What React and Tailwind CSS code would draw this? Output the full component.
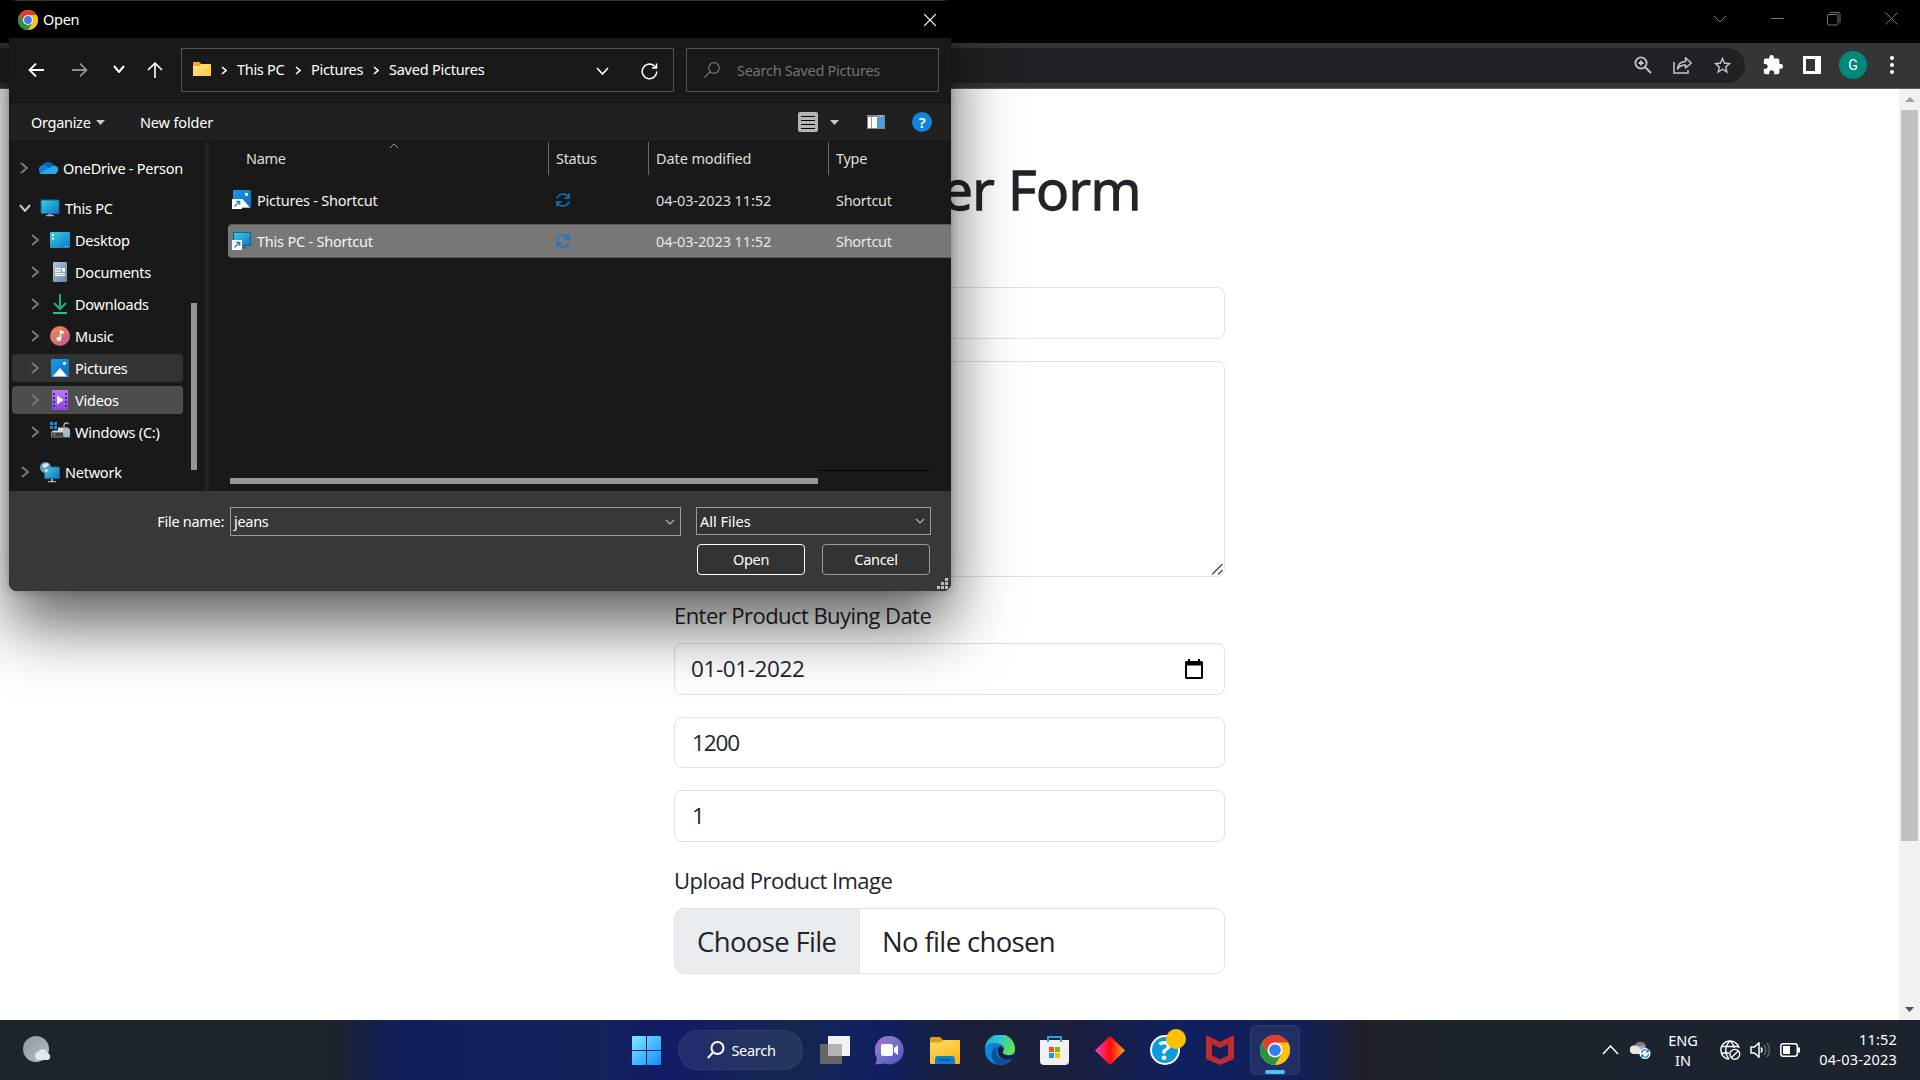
import React from 'react';

/* ---------- shared icons ---------- */

const Chrome = ({ size = 20 }) => (
  <svg width={size} height={size} viewBox="0 0 48 48">
    <circle cx="24" cy="24" r="24" fill="#fbc116" />
    <path d="M24 12 H44.8 A24 24 0 0 1 24 48 L34.4 30 Z" fill="#fbc116" />
    <path d="M3.2 12 L13.6 30 L24 24 L34.4 30 L24 48 A24 24 0 0 1 3.2 12 Z" fill="#2a9446" />
    <path d="M3.2 12 A24 24 0 0 1 44.8 12 H24 L13.6 30 Z" fill="#e33b2e" />
    <circle cx="24" cy="24" r="12" fill="#fff" />
    <circle cx="24" cy="24" r="9.4" fill="#3b7ded" />
  </svg>
);

const Chevron = ({ dir = 'right', w = 8, h = 12, color = '#7a7a7a', stroke = 2 }) => {
  const pts = {
    right: `1,1 ${w - 1},${h / 2} 1,${h - 1}`,
    down: `1,1 ${w / 2},${h - 1} ${w - 1},1`,
    up: `1,${h - 1} ${w / 2},1 ${w - 1},${h - 1}`,
  }[dir];
  return (
    <svg width={w} height={h} viewBox={`0 0 ${w} ${h}`} fill="none" stroke={color} strokeWidth={stroke} className="block shrink-0">
      <polyline points={pts} />
    </svg>
  );
};

const Triangle = ({ up = false, w = 9, h = 5, color = '#c8c8c8' }) => (
  <svg width={w} height={h} className="block shrink-0">
    <polygon points={up ? `0,${h} ${w},${h} ${w / 2},0` : `0,0 ${w},0 ${w / 2},${h}`} fill={color} />
  </svg>
);

const Gradients = () => (
  <svg width="0" height="0" className="absolute">
    <defs>
      <linearGradient id="screen" x1="0" y1="0" x2="1" y2="1"><stop offset="0" stopColor="#35d3e0" /><stop offset="1" stopColor="#1173c4" /></linearGradient>
      <linearGradient id="photo" x1="0" y1="0" x2="1" y2="1"><stop offset="0" stopColor="#1c9be6" /><stop offset="1" stopColor="#0b6ac4" /></linearGradient>
      <linearGradient id="folder" x1="0" y1="0" x2="1" y2="1"><stop offset="0" stopColor="#ffe59b" /><stop offset="1" stopColor="#ffc83a" /></linearGradient>
      <linearGradient id="doc" x1="0" y1="0" x2="1" y2="1"><stop offset="0" stopColor="#b3c5da" /><stop offset="1" stopColor="#6683a6" /></linearGradient>
      <linearGradient id="music" x1="0" y1="0" x2="1" y2="1"><stop offset="0" stopColor="#f08c4e" /><stop offset="0.55" stopColor="#d9706a" /><stop offset="1" stopColor="#a55bb5" /></linearGradient>
      <linearGradient id="video" x1="0" y1="0" x2="0" y2="1"><stop offset="0" stopColor="#b67bf2" /><stop offset="1" stopColor="#8a45e0" /></linearGradient>
      <linearGradient id="win" gradientUnits="userSpaceOnUse" x1="0" y1="0" x2="29" y2="29"><stop offset="0" stopColor="#7cecff" /><stop offset="1" stopColor="#0f8dfb" /></linearGradient>
      <linearGradient id="chat" x1="0" y1="0" x2="1" y2="1"><stop offset="0" stopColor="#b467b8" /><stop offset="0.35" stopColor="#8078c8" /><stop offset="1" stopColor="#4a4fc8" /></linearGradient>
      <linearGradient id="diamond" x1="0" y1="0" x2="1" y2="0"><stop offset="0" stopColor="#f045c8" /><stop offset="0.5" stopColor="#ff0a0a" /><stop offset="1" stopColor="#ff9c30" /></linearGradient>
      <linearGradient id="edgeA" x1="0" y1="0" x2="1" y2="0.5"><stop offset="0" stopColor="#1a9fe0" /><stop offset="0.5" stopColor="#33c5cf" /><stop offset="1" stopColor="#63e34f" /></linearGradient>
      <linearGradient id="moon" x1="0" y1="0" x2="1" y2="1"><stop offset="0" stopColor="#8d959f" /><stop offset="1" stopColor="#b9bfc7" /></linearGradient>
      <linearGradient id="exp" x1="0" y1="0" x2="0.6" y2="1"><stop offset="0" stopColor="#ffdc6b" /><stop offset="1" stopColor="#fbb818" /></linearGradient>
    </defs>
  </svg>
);

const Monitor = () => (
  <svg width="20" height="18" viewBox="0 0 20 18">
    <rect x="1" y="1" width="18" height="13.5" rx="0.8" fill="url(#screen)" stroke="#12659c" strokeWidth="1" />
    <path d="M8 15h4v1H8z" fill="#8a9aa8" /><path d="M6 16h8v1.2H6z" fill="#9fb0bd" />
  </svg>
);
const OneDrive = () => (
  <svg width="20" height="14" viewBox="0 0 20 14">
    <path d="M4 5.500A6.300 6.300 0 0 1 16 5.500L10 10z" fill="#0a62b8" />
    <path d="M4.500 13A4.500 4.500 0 0 1 5 4.100c2 0 3.600.8 5 2L14 13z" fill="#0f7fd8" />
    <path d="M1.500 12l8.500-4.600 5.800-3A4.300 4.300 0 0 1 16 13H4.500c-1 0-2.200-.3-3-1z" fill="#28a8ea" />
  </svg>
);
const Desktop = () => (
  <svg width="20" height="16" viewBox="0 0 20 16">
    <rect width="20" height="16" rx="1" fill="url(#screen)" />
    <path d="M2 2h2v2H2zM2 5.500h2v2H2z" fill="#fff" /><path d="M15 14h1v1h-1zM17 14h1v1h-1z" fill="#bfe9ff" />
  </svg>
);
const Doc = () => (
  <svg width="20" height="20" viewBox="0 0 20 20">
    <rect x="3" y="0" width="14" height="20" rx="1" fill="url(#doc)" />
    <path d="M5 6h6v1.200H5zM5 8.500h6v1.200H5zM12 6h3v3.500h-3zM5 11h10v1.200H5zM5 13h10v1H5z" fill="#fff" />
  </svg>
);
const Download = () => (
  <svg width="20" height="20" viewBox="0 0 20 20" fill="none">
    <path d="M10 0v14M4 9l6 6 6-6" stroke="#1fa98c" strokeWidth="2" /><path d="M3 19h14" stroke="#2dbd93" strokeWidth="2" />
  </svg>
);
const Music = () => (
  <svg width="20" height="20" viewBox="0 0 20 20">
    <circle cx="10" cy="10" r="10" fill="url(#music)" />
    <circle cx="8.800" cy="13" r="2.300" fill="#fff" /><path d="M9.800 4h1.300c.4 1 1.500 1.500 2.800 1.600v2c-1.100 0-2-.3-2.600-.7V13H9.800z" fill="#fff" />
  </svg>
);
const Photo = () => (
  <svg width="20" height="20" viewBox="0 0 20 20">
    <rect x="1" y="1" width="18" height="18" rx="1" fill="url(#photo)" />
    <circle cx="14.500" cy="5.300" r="1.600" fill="#fff" /><path d="M2.500 18.500L10 10l7.500 8.500z" fill="#fff" />
  </svg>
);
const Video = () => (
  <svg width="20" height="20" viewBox="0 0 20 20">
    <rect x="2" y="0" width="16" height="20" rx="1" fill="url(#video)" />
    <path d="M3 3h2v2H3zM3 7h2v2H3zM3 11h2v2H3zM3 15h2v2H3zM15 3h2v2h-2zM15 7h2v2h-2zM15 11h2v2h-2zM15 15h2v2h-2z" fill="#4a2a80" />
    <path d="M7 5.500l6.500 4.500L7 14.500z" fill="#fff" />
  </svg>
);
const Drive = () => (
  <svg width="20" height="20" viewBox="0 0 20 20">
    <path d="M0 0h3v3H0zM4 0h3v3H4zM0 4h3v3H0zM4 4h3v3H4z" fill="#1a8ae0" />
    <path d="M8 5.500h10l2 5H1l2-2h5z" fill="#d4d8da" /><rect x="1" y="10" width="19" height="5.500" rx="0.600" fill="#7c8082" /><rect x="2" y="11" width="13" height="3.500" fill="#3d4042" />
    <circle cx="4.500" cy="12.500" r="0.900" fill="#4be04b" />
    <path d="M14 5V3a2.500 2.500 0 0 1 4.500-1" fill="none" stroke="#a9bdca" strokeWidth="1.300" /><rect x="13" y="6" width="7" height="9" rx="2.500" fill="#a3b9c8" />
  </svg>
);
const Network = () => (
  <svg width="20" height="21" viewBox="0 0 20 21">
    <rect x="4.500" y="5" width="15" height="11.500" rx="0.600" fill="url(#screen)" stroke="#12659c" />
    <circle cx="5.500" cy="5.500" r="5.500" fill="#5f9fbe" /><path d="M2 3l4-2 3 1-2 3-3 1zM4 8l3-1 1 2-2 1.500z" fill="#d2ecf5" />
    <path d="M11 17h2v2h-2zM8 19h8v1.300H8z" fill="#a5b5c0" />
  </svg>
);

const Shortcut = ({ pc }) => (
  <svg width="20" height="20" viewBox="0 0 20 20">
    {pc ? (
      <g><rect x="1.500" y="1.500" width="17" height="13" fill="url(#screen)" stroke="#12659c" /><path d="M10 16h4v1.300h-4z" fill="#4b5660" /></g>
    ) : (
      <g><rect x="1" y="0" width="18" height="18" rx="1" fill="url(#photo)" /><circle cx="14.500" cy="4.400" r="1.600" fill="#fff" /><path d="M9 9l1.500 0 7.500 8.500H9z" fill="#fff" /></g>
    )}
    <rect x="0" y="9" width="10" height="10" fill="#fff" />
    <path d="M2.500 16.500l5-5M4.200 11.300h3.500v3.500" fill="none" stroke="#1b7cc4" strokeWidth="1.300" />
  </svg>
);

const Sync = () => (
  <svg width="14" height="14" viewBox="0 0 14 14" fill="none" stroke="#0b7ad6" strokeWidth="1.400">
    <path d="M1 5.500A6.200 6.200 0 0 1 12.500 4.500M13 .5v4.500H8.500M13 8.500A6.200 6.200 0 0 1 1.500 9.500M1 13.500V9h4.500" />
  </svg>
);

/* ---------- browser ---------- */

function BrowserBar() {
  return (
    <>
      <div className="flex h-[43px] items-start justify-end bg-black">
        <div className="flex h-[37px] w-[220px] items-center justify-between pr-[22px] pl-[13px]">
          <Chevron dir="down" w={14} h={8} color="#777" stroke={1} />
          <svg width="13" height="13" className="ml-1"><path d="M0 6.500h13" stroke="#777" /></svg>
          <svg width="14" height="14" fill="none" stroke="#777" className="ml-1"><rect x="0.500" y="2.500" width="10.500" height="10.500" rx="1.500" /><path d="M3 .6h8a2 2 0 0 1 2 2v8" /></svg>
          <svg width="13" height="13" stroke="#777" className="ml-1"><path d="M.5 .5l12 12M12.500 .5l-12 12" /></svg>
        </div>
      </div>
      <div className="flex h-[46px] items-center justify-end border-b border-[#5c5c5c] bg-[#353535]">
        <div className="flex h-[35px] flex-1 items-center justify-end gap-5 rounded-r-full bg-[#202124] pr-[12px] pb-px">
          <svg width="18" height="18" viewBox="0 0 18 18" fill="none" stroke="#c4c6c9" strokeWidth="1.800" className="mr-px"><circle cx="7" cy="7" r="5.600" /><path d="M11 11l6 6M4.500 7h5M7 4.500v5" /></svg>
          <svg width="20" height="18" viewBox="0 0 20 18" fill="none" stroke="#c4c6c9" strokeWidth="1.500"><path d="M1 6v11h14v-3" /><path d="M4.500 13c.5-5 3.500-7.500 8-7.500V1.800l5.800 5.200-5.800 5V9c-3.500 0-6 1-8 4z" strokeLinejoin="round" /></svg>
          <svg width="21" height="21" viewBox="0 0 24 24" className="-ml-px" fill="#c4c6c9"><path d="M22 9.240l-7.190-.62L12 2 9.190 8.630 2 9.240l5.460 4.730L5.820 21 12 17.270 18.180 21l-1.630-7.030L22 9.240zM12 15.400l-3.760 2.270 1-4.280-3.320-2.880 4.380-.38L12 6.100l1.710 4.040 4.380.38-3.320 2.880 1 4.280L12 15.400z" /></svg>
        </div>
        <div className="flex w-[175px] items-center pb-px pl-[17px]">
          <svg width="22" height="22" viewBox="0 0 24 24" fill="#fff"><path d="M20.500 11H19V7c0-1.100-.9-2-2-2h-4V3.500a2.500 2.500 0 0 0-5 0V5H4c-1.100 0-1.990.9-1.990 2v3.800H3.500c1.490 0 2.700 1.210 2.700 2.700s-1.210 2.700-2.700 2.700H2V20c0 1.100.9 2 2 2h3.800v-1.500c0-1.490 1.210-2.700 2.700-2.700s2.700 1.210 2.700 2.700V22H17c1.100 0 2-.9 2-2v-4h1.500a2.500 2.500 0 0 0 0-5z" /></svg>
          <div className="ml-[19px] h-[18px] w-[18px] border-[3px] border-r-[6px] border-white" />
          <div className="ml-[18px] flex h-7 w-7 items-center justify-center rounded-full bg-[#00897b] font-[Roboto] text-[14px] text-white">G</div>
          <div className="ml-[23px] flex flex-col gap-[3px]">
            <i className="h-1 w-1 rounded-full bg-white" /><i className="h-1 w-1 rounded-full bg-white" /><i className="h-1 w-1 rounded-full bg-white" />
          </div>
        </div>
      </div>
    </>
  );
}

const field = 'flex items-center rounded-[8px] border border-[#dee2e6] bg-white px-[17px] text-[22.5px] tracking-[-0.6px]';

function Page() {
  return (
    <div className="flex h-[931px] bg-white font-['Open_Sans',sans-serif] text-[#212529]">
      <div className="flex flex-1 flex-col pl-[674px]">
        <div className="mt-[64px] flex h-[72px] w-[467px] items-center justify-end text-[55px] tracking-[-0.5px] whitespace-nowrap [-webkit-text-stroke:1.3px_#212529]">er Form</div>
        <div className="mt-[62px] flex w-[551px] flex-col">
          <div className={`${field} h-[52px]`} />
          <div className="mt-[22px] flex h-[216px] items-end justify-end rounded-[8px] border border-[#dee2e6] p-px">
            <svg width="11" height="11" stroke="#444" strokeWidth="1.300"><path d="M0 10.500L10.500 0M6 10.500L10.500 6" /></svg>
          </div>
          <div className="flex h-[66px] items-center pt-[11px] text-[22px] tracking-[-0.55px]">Enter Product Buying Date</div>
          <div className={`${field} h-[52px] justify-between`}>
            <span className="-ml-px tracking-[-0.4px]">01-01-2022</span>
            <svg width="18" height="20" viewBox="0 0 18 20" className="mr-1"><path d="M3 0h2v2h8V0h2v2h1.500A1.500 1.500 0 0 1 18 3.500v15a1.500 1.500 0 0 1-1.500 1.500h-15A1.500 1.500 0 0 1 0 18.500v-15A1.500 1.500 0 0 1 1.500 2H3zM2 6.500V18h14V6.500z" fill="#000" /></svg>
          </div>
          <div className={`${field} mt-[22px] h-[51px]`}><span className="tracking-[-1.1px]">1200</span></div>
          <div className={`${field} mt-[22px] h-[52px]`}>1</div>
          <div className="flex h-[66px] items-center pt-[11px] text-[22px] tracking-[-0.55px]">Upload Product Image</div>
          <div className="flex h-[66px] items-stretch overflow-hidden rounded-[10px] border border-[#dee2e6] text-[27.500px] tracking-[-0.650px]">
            <div className="flex w-[185px] items-center border-r border-[#dee2e6] bg-[#e9ecef] pt-px pl-[22px] whitespace-nowrap">Choose File</div>
            <div className="flex items-center pt-px pl-[22px]">No file chosen</div>
          </div>
        </div>
      </div>
      <div className="flex w-[21px] flex-col items-center bg-[#f1f1f1]">
        <div className="flex h-[21px] items-center"><Triangle up w={10} h={5} color="#a0a0a0" /></div>
        <div className="h-[731px] w-[17px] bg-[#c1c1c1]" />
        <div className="flex-1" />
        <div className="flex h-[21px] items-center"><Triangle w={9} h={5} color="#505050" /></div>
      </div>
    </div>
  );
}

/* ---------- file dialog ---------- */

const tree = [
  { label: 'OneDrive - Person', icon: <OneDrive />, top: true },
  { label: 'This PC', icon: <Monitor />, top: true, open: true },
  { label: 'Desktop', icon: <Desktop /> },
  { label: 'Documents', icon: <Doc /> },
  { label: 'Downloads', icon: <Download /> },
  { label: 'Music', icon: <Music /> },
  { label: 'Pictures', icon: <Photo />, bg: 'bg-[#333333]' },
  { label: 'Videos', icon: <Video />, bg: 'bg-[#4d4d4d]' },
  { label: 'Windows (C:)', icon: <Drive /> },
  { label: 'Network', icon: <Network />, top: true, gap: true },
];

function TreeRow({ item }) {
  const margin = item.open || item.gap ? 'mt-3' : item.label === 'OneDrive - Person' ? '' : 'mt-1';
  return (
    <div className={`flex h-7 w-[171px] shrink-0 items-center overflow-hidden rounded-sm ${margin} ${item.bg || ''} ${item.top ? 'pl-[6px]' : 'pl-[16px]'}`}>
      <div className={`flex items-center justify-center ${item.top ? 'w-[14px]' : 'w-[13px]'}`}>
        {item.open ? <Chevron dir="down" w={12} h={8} color="#c6c6c6" /> : <Chevron w={8} h={12} color="#777" />}
      </div>
      <div className={`flex w-5 shrink-0 justify-center ${item.top ? 'ml-2' : 'ml-[9px]'}`}>{item.icon}</div>
      <div className="ml-[5px] pt-px tracking-[-0.24px] whitespace-nowrap">{item.label}</div>
    </div>
  );
}

function FileRow({ name, pc, selected }) {
  return (
    <div className={`flex h-[34px] items-center rounded-l-sm pl-[4px] ${selected ? 'border-y border-[#5a5a5a] bg-[#777777] text-[#e8e8e8]' : 'text-[#dedede]'}`}>
      <Shortcut pc={pc} />
      <div className="ml-[5px] w-[299px] pt-px tracking-[-0.22px] text-[#f4f4f4]">{name}</div>
      <div className="w-[100px]"><Sync /></div>
      <div className="w-[180px] pt-px tracking-[-0.08px]">04-03-2023 11:52</div>
      <div className="pt-px">Shortcut</div>
    </div>
  );
}

function Dialog() {
  return (
    <div className="absolute top-0 left-[9px] flex h-[591px] w-[942px] flex-col overflow-hidden rounded-[8px] bg-[#191919] text-[14.500px] tracking-[-0.300px] text-white shadow-[0_34px_64px_rgba(0,0,0,0.62),0_0_8px_rgba(0,0,0,0.25)]">
      <div className="flex h-[38px] shrink-0 items-center border-t border-[#333] bg-black pr-[15px] pl-[9px]">
        <Chrome size={20} />
        <span className="ml-[5px] flex-1 pt-px">Open</span>
        <svg width="12" height="12" stroke="#fff" strokeWidth="1.200"><path d="M0 0l12 12M12 0L0 12" /></svg>
      </div>

      <div className="flex h-[65px] shrink-0 items-center pb-[1px] pl-[19px]">
        <svg width="16" height="14" fill="none" stroke="#fff" strokeWidth="1.800"><path d="M16 7H1.500M8 .6L1.500 7 8 13.400" /></svg>
        <svg width="16" height="14" fill="none" stroke="#8f8f8f" strokeWidth="1.800" className="ml-[28px]"><path d="M0 7h14.500M8 .6L14.500 7 8 13.400" /></svg>
        <div className="ml-[25px] -mt-0.5"><Chevron dir="down" w={12} h={8} color="#fff" /></div>
        <svg width="16" height="16" fill="none" stroke="#fff" strokeWidth="1.600" className="ml-[22px]"><path d="M8 16V1.500M1 8l7-6.800L15 8" /></svg>
        <div className="ml-[18px] flex h-[44px] w-[493px] shrink-0 items-center border border-[#535353] pl-[11px]">
          <svg width="18" height="14" className="-mt-0.5 shrink-0"><path d="M0 1a1 1 0 0 1 1-1h5.500l1.500 2H17v5H0z" fill="#f4a81a" /><path d="M0 4h6.500L8.500 2H17a1 1 0 0 1 1 1v11H0z" fill="url(#folder)" /></svg>
          <div className="ml-[10px]"><Chevron w={6} h={9} color="#fff" stroke={1.600} /></div>
          <span className="ml-[10px] w-[58px] whitespace-nowrap">This PC</span>
          <Chevron w={6} h={9} color="#fff" stroke={1.600} />
          <span className="ml-[10px] w-[62px] whitespace-nowrap">Pictures</span>
          <Chevron w={6} h={9} color="#fff" stroke={1.600} />
          <span className="ml-[10px] flex-1 tracking-[-0.24px] whitespace-nowrap">Saved Pictures</span>
          <div className="mt-0.5"><Chevron dir="down" w={13} h={8} color="#fff" stroke={1.600} /></div>
          <svg width="17" height="17" viewBox="0 0 17 17" fill="none" stroke="#fff" strokeWidth="1.500" className="mt-0.5 mr-[15px] ml-[32px]"><path d="M15.800 8.500A7.300 7.300 0 1 1 13 2.700L15.500 5M15.500 .5V5H11" /></svg>
        </div>
        <div className="ml-[12px] flex h-[44px] w-[253px] shrink-0 items-center border border-[#535353] pl-[17px] text-[#747474]">
          <svg width="16" height="16" fill="none" stroke="#747474" strokeWidth="1.200"><circle cx="10" cy="6" r="5.300" /><path d="M6 10L.5 15.500" /></svg>
          <span className="ml-[17px] pt-px tracking-[-0.26px]">Search Saved Pictures</span>
        </div>
      </div>

      <div className="flex h-[38px] shrink-0 items-center bg-[#202020] pl-[22px]">
        <span className="w-[65px] pt-px">Organize</span>
        <Triangle />
        <span className="ml-[35px] flex-1 pt-px tracking-[-0.15px]">New folder</span>
        <svg width="20" height="20"><rect width="20" height="20" rx="2" fill="#b4b4b4" /><path d="M3 4.500h14M3 8.500h14M3 12.500h14M3 16.500h14" stroke="#000" strokeWidth="1.200" /></svg>
        <div className="ml-[12px]"><Triangle /></div>
        <svg width="18" height="14" className="ml-[28px]"><rect width="18" height="14" fill="#82878c" /><rect x="1" y="2" width="9" height="11" fill="#fff" /><path d="M4.500 2v11" stroke="#999" /><rect x="10.500" y="2" width="6.500" height="11" fill="#4a9ee6" /><path d="M11 1h1M13 1h1M15 1h1" stroke="#fff" /></svg>
        <div className="mr-[19px] ml-[27px] flex h-5 w-5 items-center justify-center rounded-full bg-[#0f86de] text-[15px] font-semibold">?</div>
      </div>

      <div className="flex h-[350px] shrink-0 border-t border-[#151515]">
        <div className="flex w-[177px] flex-col pt-[12px] pl-[3px]">
          {tree.map((item) => <TreeRow key={item.label} item={item} />)}
        </div>
        <div className="w-[19px] pt-[161px] pl-[5px]"><div className="h-[167px] w-[6px] bg-[#969696]" /></div>
        <div className="w-1 bg-[#232323]" />
        <div className="flex flex-1 flex-col pl-[19px]">
          <div className="flex h-[33px] shrink-0 text-[#dedede]">
            <div className="relative flex w-[320px] items-center pl-[18px]">
              Name
              <div className="absolute top-px left-[161px]"><Chevron dir="up" w={10} h={6} color="#a0a0a0" stroke={1} /></div>
            </div>
            <div className="flex w-[100px] items-center border-l border-[#6a6a6a] pl-[7px]">Status</div>
            <div className="flex w-[180px] items-center border-l border-[#6a6a6a] pl-[7px] tracking-[-0.1px]">Date modified</div>
            <div className="flex items-center border-l border-[#6a6a6a] pl-[7px]">Type</div>
          </div>
          <div className="mt-[8px]"><FileRow name="Pictures - Shortcut" /></div>
          <div className="mt-[7px]"><FileRow name="This PC - Shortcut" pc selected /></div>
          <div className="mt-[212px] ml-[590px] h-px w-[112px] bg-black" />
          <div className="mt-[7px] ml-[2px] h-[6px] w-[588px] bg-[#969696]" />
        </div>
      </div>

      <div className="relative flex flex-1 flex-col bg-[#383838]">
        <div className="mt-[16px] flex items-start">
          <div className="flex h-[29px] w-[221px] items-center justify-end pr-[6px]">File name:</div>
          <div className="flex h-[29px] w-[451px] items-center justify-between border border-[#9b9b9b] pr-[5px] pl-[3px]">jeans<Chevron dir="down" w={10} h={6} color="#b5b5b5" stroke={1.200} /></div>
          <div className="ml-[15px] flex h-[28px] w-[235px] items-center justify-between border border-[#9b9b9b] bg-[#333] pr-[5px] pl-[3px]"><span className="pt-px tracking-[0px]">All Files</span><Chevron dir="down" w={10} h={6} color="#b5b5b5" stroke={1.200} /></div>
        </div>
        <div className="mt-[8px] flex justify-end gap-[17px] pr-[21px]">
          <div className="flex h-[31px] w-[108px] items-center justify-center rounded-[4px] border border-white bg-[#333]">Open</div>
          <div className="flex h-[31px] w-[108px] items-center justify-center rounded-[4px] border border-[#9b9b9b] bg-[#333]">Cancel</div>
        </div>
        <svg width="11" height="11" className="absolute right-[3px] bottom-[2px]" fill="#bdbdbd"><path d="M8 0h3v3H8zM4 4h3v3H4zM8 4h3v3H8zM0 8h3v3H0zM4 8h3v3H4zM8 8h3v3H8z" /></svg>
      </div>
    </div>
  );
}

/* ---------- taskbar ---------- */

const Tile = ({ children }) => <div className="flex h-[50px] w-[55px] shrink-0 items-center justify-center">{children}</div>;

function Taskbar() {
  return (
    <div className="flex h-[60px] items-center bg-[linear-gradient(90deg,#1d242e_0,#1d242e_330px,#11205c_400px,#12235c_600px,#131b66_670px,#14284f_790px,#111f63_880px,#1b2038_970px,#1a1f40_1080px,#102060_1180px,#112058_1300px,#1f1f2c_1360px,#1d242e_1460px,#1c222e_1920px)] text-[14.500px] tracking-[-0.300px] text-white">
      <div className="w-[619px] pl-[22px]">
        <svg width="30" height="30" viewBox="0 0 30 30"><circle cx="14" cy="14" r="13" fill="url(#moon)" /><path d="M17 25a4.500 4.500 0 0 1-.5-8.800 5.500 5.500 0 0 1 9.500 2A3.700 3.700 0 0 1 26 25z" fill="#e4e8ee" /></svg>
      </div>
      <Tile>
        <svg width="29" height="29" viewBox="0 0 29 29"><path d="M1 0h13v14H0V1a1 1 0 0 1 1-1zM15 0h13a1 1 0 0 1 1 1v13H15zM0 15h14v14H1a1 1 0 0 1-1-1zM15 15h14v13a1 1 0 0 1-1 1H15z" fill="url(#win)" /></svg>
      </Tile>
      <div className="ml-[4px] flex h-10 w-[125px] items-center justify-center rounded-full border border-white/5 bg-white/[0.07]">
        <svg width="18" height="18" fill="none" stroke="#fff" strokeWidth="2" className="ml-0.5"><circle cx="10.500" cy="7" r="6" /><path d="M6 11.500L.8 17" /></svg>
        <span className="ml-[6px] pt-px">Search</span>
      </div>
      <div className="ml-[4px] flex">
        <Tile>
          <svg width="30" height="28" viewBox="0 0 30 28"><rect x="8" y="0" width="22" height="20" rx="1" fill="#f2f2f2" /><rect x="0" y="8" width="22" height="20" rx="1" fill="#666" /><rect x="8" y="8" width="14" height="12" fill="#b4b4b4" /></svg>
        </Tile>
        <Tile>
          <svg width="29" height="29" viewBox="0 0 29 29"><path d="M14.500 0a14.200 14.200 0 1 1-5 27.500L.5 28.500 2 22A14.200 14.200 0 0 1 14.500 0z" fill="url(#chat)" /><rect x="6" y="8" width="12" height="12" rx="2" fill="#fff" /><path d="M19 12l4-3v10l-4-3z" fill="#fff" /></svg>
        </Tile>
        <Tile>
          <svg width="30" height="27" viewBox="0 0 30 27"><path d="M0 1.500A1.500 1.500 0 0 1 1.500 0H10l3 3h16v5H0z" fill="#e0a010" /><path d="M0 5.500h11L14 3h15a1 1 0 0 1 1 1v22a1 1 0 0 1-1 1H1a1 1 0 0 1-1-1z" fill="url(#exp)" /><path d="M5 27v-5a3 3 0 0 1 3-3h14a3 3 0 0 1 3 3v5z" fill="#0f80d0" /><path d="M8.500 23h13" stroke="#0a4f90" strokeWidth="1.300" /></svg>
        </Tile>
        <Tile>
          <svg width="30" height="30" viewBox="0 0 30 30">
            <circle cx="15" cy="15" r="15" fill="#0f7bd0" />
            <path d="M0 14A15 15 0 0 1 30 14c0 4-3 6-7 6-3 0-5-1-5-2.500 0-1 1-1.500 1-3.500 0-3-3-6-8-6-6 0-10 3-11 6z" fill="url(#edgeA)" />
            <path d="M11 8c-5 2-6 15 3 19 5 2 10 1 13.500-3.500A15 15 0 0 1 12 29.700C5 28 0 22 0 15c1-5 5-8 11-7z" fill="#0f86d8" />
            <path d="M12.500 12.500C9 17 13 27 24 25l3-1.500A15 15 0 0 1 13 29.900C4 26 5 14 12.500 12.500z" fill="#0d4f9a" />
            <path d="M13 13c1-2 4-2 5.500 0 .6 1.500-.8 2.500-.8 4 0 3 5 4.500 10.800 2.500l2 0-3 4c-6 3-16 1-14.500-10.500z" fill="#191f3e" />
          </svg>
        </Tile>
        <Tile>
          <svg width="29" height="29" viewBox="0 0 29 29"><path d="M8 6V1h13v5" fill="none" stroke="#1da3e8" strokeWidth="2" /><path d="M0 4h29v21a4 4 0 0 1-4 4H4a4 4 0 0 1-4-4z" fill="#f0f0f0" /><path d="M8 4v2M21 4v2" stroke="#1da3e8" strokeWidth="2" /><path d="M9 11h5v5H9z" fill="#f25022" /><path d="M15 11h5v5h-5z" fill="#7fba00" /><path d="M9 17h5v5H9z" fill="#00a4ef" /><path d="M15 17h5v5h-5z" fill="#ffb900" /></svg>
        </Tile>
        <Tile><svg width="30" height="29" viewBox="0 0 30 29"><path d="M15 0l15 14.500L15 29 0 14.500z" fill="url(#diamond)" /></svg></Tile>
        <Tile>
          <div className="relative flex h-[30px] w-[30px] items-center justify-center rounded-full border-2 border-white bg-[#0a9bdc] text-[26px] font-bold">
            ?<div className="absolute -top-[8px] left-[14px] h-5 w-5 rounded-full bg-[#ffc107]" />
          </div>
        </Tile>
        <Tile><svg width="28" height="30" viewBox="0 0 28 30"><path d="M0 0l14 7L28 0v24l-14 6L0 24zM6 9v11.500l8 4 8-4V9l-8 4z" fill="#c02b2f" fillRule="evenodd" /></svg></Tile>
        <div className="relative ml-[3px] flex h-[50px] w-[50px] items-center justify-center rounded-md border border-white/5 bg-white/[0.07]">
          <Chrome size={30} />
          <div className="absolute bottom-0 left-[14px] h-1 w-5 rounded-full bg-[#4cc2ff]" />
        </div>
      </div>
      <div className="ml-auto flex items-center pr-[23px]">
        <Chevron dir="up" w={17} h={10} color="#fff" stroke={1.500} />
        <svg width="21" height="18" viewBox="0 0 21 18" className="ml-[11px]"><path d="M5 4a6 6 0 0 1 11 1L9 9z" fill="#7d7d7d" /><path d="M3 13a4 4 0 0 1 2-8.500c3 0 8 3 10 8.500z" fill="#e6e6e6" /><path d="M9 5a6 6 0 0 1 8 3l-5 4z" fill="#a8a8a8" /><circle cx="15" cy="12.500" r="5.500" fill="#fff" /><path d="M11.500 12a3.500 3.500 0 0 1 6.500-1.500M18.500 13a3.500 3.500 0 0 1-6.500 1.500M18.300 8.500v2.500h-2.500M11.700 16.500V14h2.500" fill="none" stroke="#1176c8" strokeWidth="1.200" /></svg>
        <div className="ml-[14px] flex w-[36px] flex-col pb-px text-center leading-[20px] tracking-normal"><span>ENG</span><span>IN</span></div>
        <svg width="21" height="20" viewBox="0 0 21 20" className="ml-[19px]" fill="none" stroke="#fff" strokeWidth="1.400"><path d="M19 8A9.200 9.200 0 1 0 9 19.200M1.500 6.500h17M1 13h8M10 1C4.500 6 4.500 14 9 19M10 1c2.500 2 4 4.500 4 7" /><circle cx="14.800" cy="14.300" r="4.900" /><path d="M11.500 17.600l6.600-6.600" /></svg>
        <svg width="21" height="18" viewBox="0 0 21 18" className="ml-[9px]" fill="none" stroke="#fff" strokeWidth="1.500"><path d="M1 6h3.500L9 1.800v14.400L4.500 12H1z" strokeLinejoin="round" /><path d="M11 6.500a4 4 0 0 1 0 5" /><path d="M14 4a7.500 7.500 0 0 1 0 10M17 2a11 11 0 0 1 0 14" stroke="#5d6470" /></svg>
        <svg width="21" height="14" viewBox="0 0 21 14" className="ml-[9px]"><rect x="0.800" y="0.800" width="16.500" height="12.400" rx="2.500" fill="none" stroke="#fff" strokeWidth="1.500" /><rect x="3" y="3" width="7" height="8" fill="#fff" /><path d="M18 4.500h2v5h-2z" fill="#fff" /></svg>
        <div className="ml-[18px] flex w-[78px] flex-col items-end pb-[3px] leading-[20px] tracking-[0.200px] whitespace-nowrap"><span>11:52</span><span>04-03-2023</span></div>
      </div>
    </div>
  );
}

export default function App() {
  return (
    <div className="relative flex h-[1080px] w-[1920px] flex-col overflow-hidden bg-white font-['Noto_Sans','Open_Sans',sans-serif]">
      <Gradients />
      <BrowserBar />
      <Page />
      <Taskbar />
      <Dialog />
    </div>
  );
}
